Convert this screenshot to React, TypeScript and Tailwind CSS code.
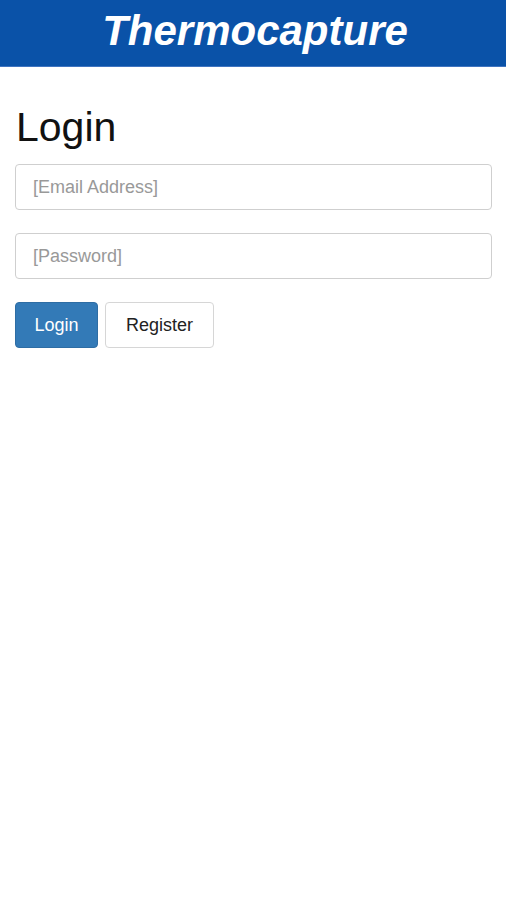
import React from 'react';

const font = { fontFamily: '"Liberation Sans", Arial, sans-serif' };

export default function App() {
  return (
    <div className="min-h-[900px] bg-white" style={font}>
      {/* Header bar */}
      <header className="h-[67px] bg-[#0a52a8] border-b border-[#3f74c0] flex items-start justify-center">
        <h1 className="text-[42px] leading-[62px] font-bold italic text-white pl-[4px]">
          Thermocapture
        </h1>
      </header>

      {/* Login form */}
      <main className="pl-[15px] pr-[14px]">
        <h2 className="text-[41px] leading-none text-[#111] mt-[40px] mb-[16px] pl-[1px]">Login</h2>
        <div className="flex flex-col gap-[23px]">
          <input
            type="email"
            placeholder="[Email Address]"
            className="h-[46px] w-full rounded-[4px] border border-[#cfcfcf] px-[17px] text-[18px] text-[#333] placeholder:text-[#999] outline-none"
          />
          <input
            type="password"
            placeholder="[Password]"
            className="h-[46px] w-full rounded-[4px] border border-[#cfcfcf] px-[17px] text-[18px] text-[#333] placeholder:text-[#999] outline-none"
          />
        </div>
        <div className="flex gap-[7px] mt-[23px]">
          <button className="h-[46px] w-[83px] rounded-[4px] border border-[#2e6da4] bg-[#337ab7] text-white text-[18px]">
            Login
          </button>
          <button className="h-[46px] w-[109px] rounded-[4px] border border-[#d6d6d6] bg-white text-[#222] text-[18px]">
            Register
          </button>
        </div>
      </main>
    </div>
  );
}
